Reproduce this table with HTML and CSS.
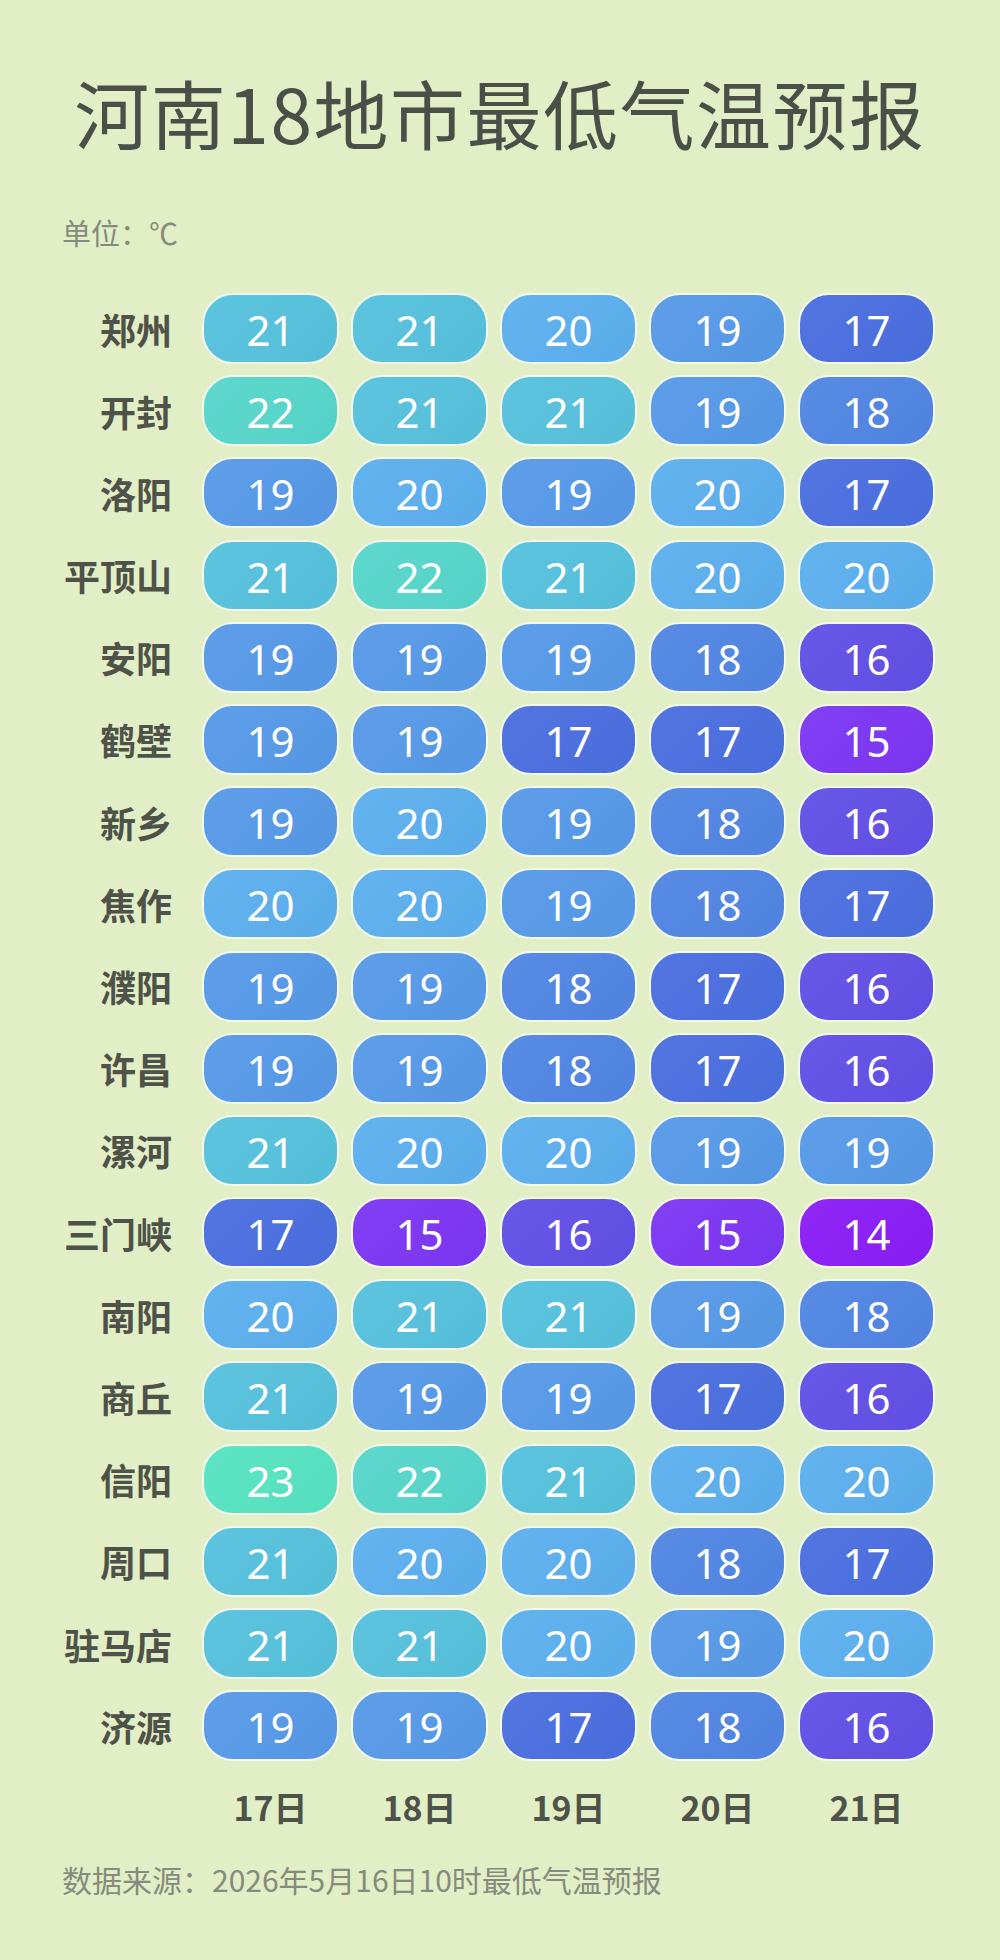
FILE: index.html
```html
<!DOCTYPE html>
<html lang="zh-CN">
<head>
<meta charset="utf-8">
<title>河南18地市最低气温预报</title>
<link rel="stylesheet" href="styles.css">
</head>
<body>
<main class="page">
  <h1 class="title">河南18地市最低气温预报</h1>
  <p class="unit">单位：℃</p>
  <div class="grid">
    <div class="city">郑州</div><div class="cell t21">21</div><div class="cell t21">21</div><div class="cell t20">20</div><div class="cell t19">19</div><div class="cell t17">17</div>
    <div class="city">开封</div><div class="cell t22">22</div><div class="cell t21">21</div><div class="cell t21">21</div><div class="cell t19">19</div><div class="cell t18">18</div>
    <div class="city">洛阳</div><div class="cell t19">19</div><div class="cell t20">20</div><div class="cell t19">19</div><div class="cell t20">20</div><div class="cell t17">17</div>
    <div class="city">平顶山</div><div class="cell t21">21</div><div class="cell t22">22</div><div class="cell t21">21</div><div class="cell t20">20</div><div class="cell t20">20</div>
    <div class="city">安阳</div><div class="cell t19">19</div><div class="cell t19">19</div><div class="cell t19">19</div><div class="cell t18">18</div><div class="cell t16">16</div>
    <div class="city">鹤壁</div><div class="cell t19">19</div><div class="cell t19">19</div><div class="cell t17">17</div><div class="cell t17">17</div><div class="cell t15">15</div>
    <div class="city">新乡</div><div class="cell t19">19</div><div class="cell t20">20</div><div class="cell t19">19</div><div class="cell t18">18</div><div class="cell t16">16</div>
    <div class="city">焦作</div><div class="cell t20">20</div><div class="cell t20">20</div><div class="cell t19">19</div><div class="cell t18">18</div><div class="cell t17">17</div>
    <div class="city">濮阳</div><div class="cell t19">19</div><div class="cell t19">19</div><div class="cell t18">18</div><div class="cell t17">17</div><div class="cell t16">16</div>
    <div class="city">许昌</div><div class="cell t19">19</div><div class="cell t19">19</div><div class="cell t18">18</div><div class="cell t17">17</div><div class="cell t16">16</div>
    <div class="city">漯河</div><div class="cell t21">21</div><div class="cell t20">20</div><div class="cell t20">20</div><div class="cell t19">19</div><div class="cell t19">19</div>
    <div class="city">三门峡</div><div class="cell t17">17</div><div class="cell t15">15</div><div class="cell t16">16</div><div class="cell t15">15</div><div class="cell t14">14</div>
    <div class="city">南阳</div><div class="cell t20">20</div><div class="cell t21">21</div><div class="cell t21">21</div><div class="cell t19">19</div><div class="cell t18">18</div>
    <div class="city">商丘</div><div class="cell t21">21</div><div class="cell t19">19</div><div class="cell t19">19</div><div class="cell t17">17</div><div class="cell t16">16</div>
    <div class="city">信阳</div><div class="cell t23">23</div><div class="cell t22">22</div><div class="cell t21">21</div><div class="cell t20">20</div><div class="cell t20">20</div>
    <div class="city">周口</div><div class="cell t21">21</div><div class="cell t20">20</div><div class="cell t20">20</div><div class="cell t18">18</div><div class="cell t17">17</div>
    <div class="city">驻马店</div><div class="cell t21">21</div><div class="cell t21">21</div><div class="cell t20">20</div><div class="cell t19">19</div><div class="cell t20">20</div>
    <div class="city">济源</div><div class="cell t19">19</div><div class="cell t19">19</div><div class="cell t17">17</div><div class="cell t18">18</div><div class="cell t16">16</div>
    <div class="corner"></div><div class="day">17日</div><div class="day">18日</div><div class="day">19日</div><div class="day">20日</div><div class="day">21日</div>
  </div>
  <p class="source">数据来源：2026年5月16日10时最低气温预报</p>
</main>
</body>
</html>
```
FILE: styles.css
```css
html, body {
  margin: 0;
  padding: 0;
  background: #e2efc6;
}
body {
  font-family: "Noto Sans CJK SC", "Noto Sans", sans-serif;
  width: 1000px;
  height: 1960px;
}
.page {
  padding: 66px 0 0 62px;
  box-sizing: border-box;
}
.title {
  margin: 0 0 0 -62px;
  text-align: center;
  font-size: 75px;
  line-height: 92px;
  font-weight: 400;
  letter-spacing: 1.5px;
  color: #4b4f47;
}
.unit {
  margin: 54px 0 0;
  font-size: 29px;
  line-height: 40px;
  color: #868b7d;
}
.grid {
  margin-top: 41px;
  display: grid;
  grid-template-columns: 128px repeat(5, 137px);
  grid-template-rows: repeat(18, 71px) auto;
  column-gap: 12px;
  row-gap: 11.2px;
}
.city {
  display: flex;
  align-items: center;
  justify-content: flex-end;
  padding-right: 18px;
  font-size: 36px;
  font-weight: 700;
  color: #4e5248;
  white-space: nowrap;
}
.cell {
  box-sizing: border-box;
  border: 2px solid #f2f8ea;
  border-radius: 31px;
  display: flex;
  align-items: center;
  justify-content: center;
  color: #ffffff;
  font-family: "Noto Sans", "Open Sans", sans-serif;
  font-size: 42px;
  line-height: 1;
  padding-top: 3px;
  background-image: linear-gradient(135deg, rgba(255,255,255,0.05), rgba(0,0,0,0.02));
}
.t23 { background-color: #56e3c1; }
.t22 { background-color: #56d6cb; }
.t21 { background-color: #55c1dd; }
.t20 { background-color: #5bafee; }
.t19 { background-color: #5699e8; }
.t18 { background-color: #5085e3; }
.t17 { background-color: #4a6ee0; }
.t16 { background-color: #614fe6; }
.t15 { background-color: #7c35f3; }
.t14 { background-color: #8a1cf6; }
.day {
  margin-top: 15px;
  text-align: center;
  font-size: 34px;
  line-height: 40px;
  font-weight: 700;
  color: #4e5248;
}
.source {
  margin: 32px 0 0;
  font-size: 30px;
  line-height: 40px;
  color: #868b7d;
}
```
